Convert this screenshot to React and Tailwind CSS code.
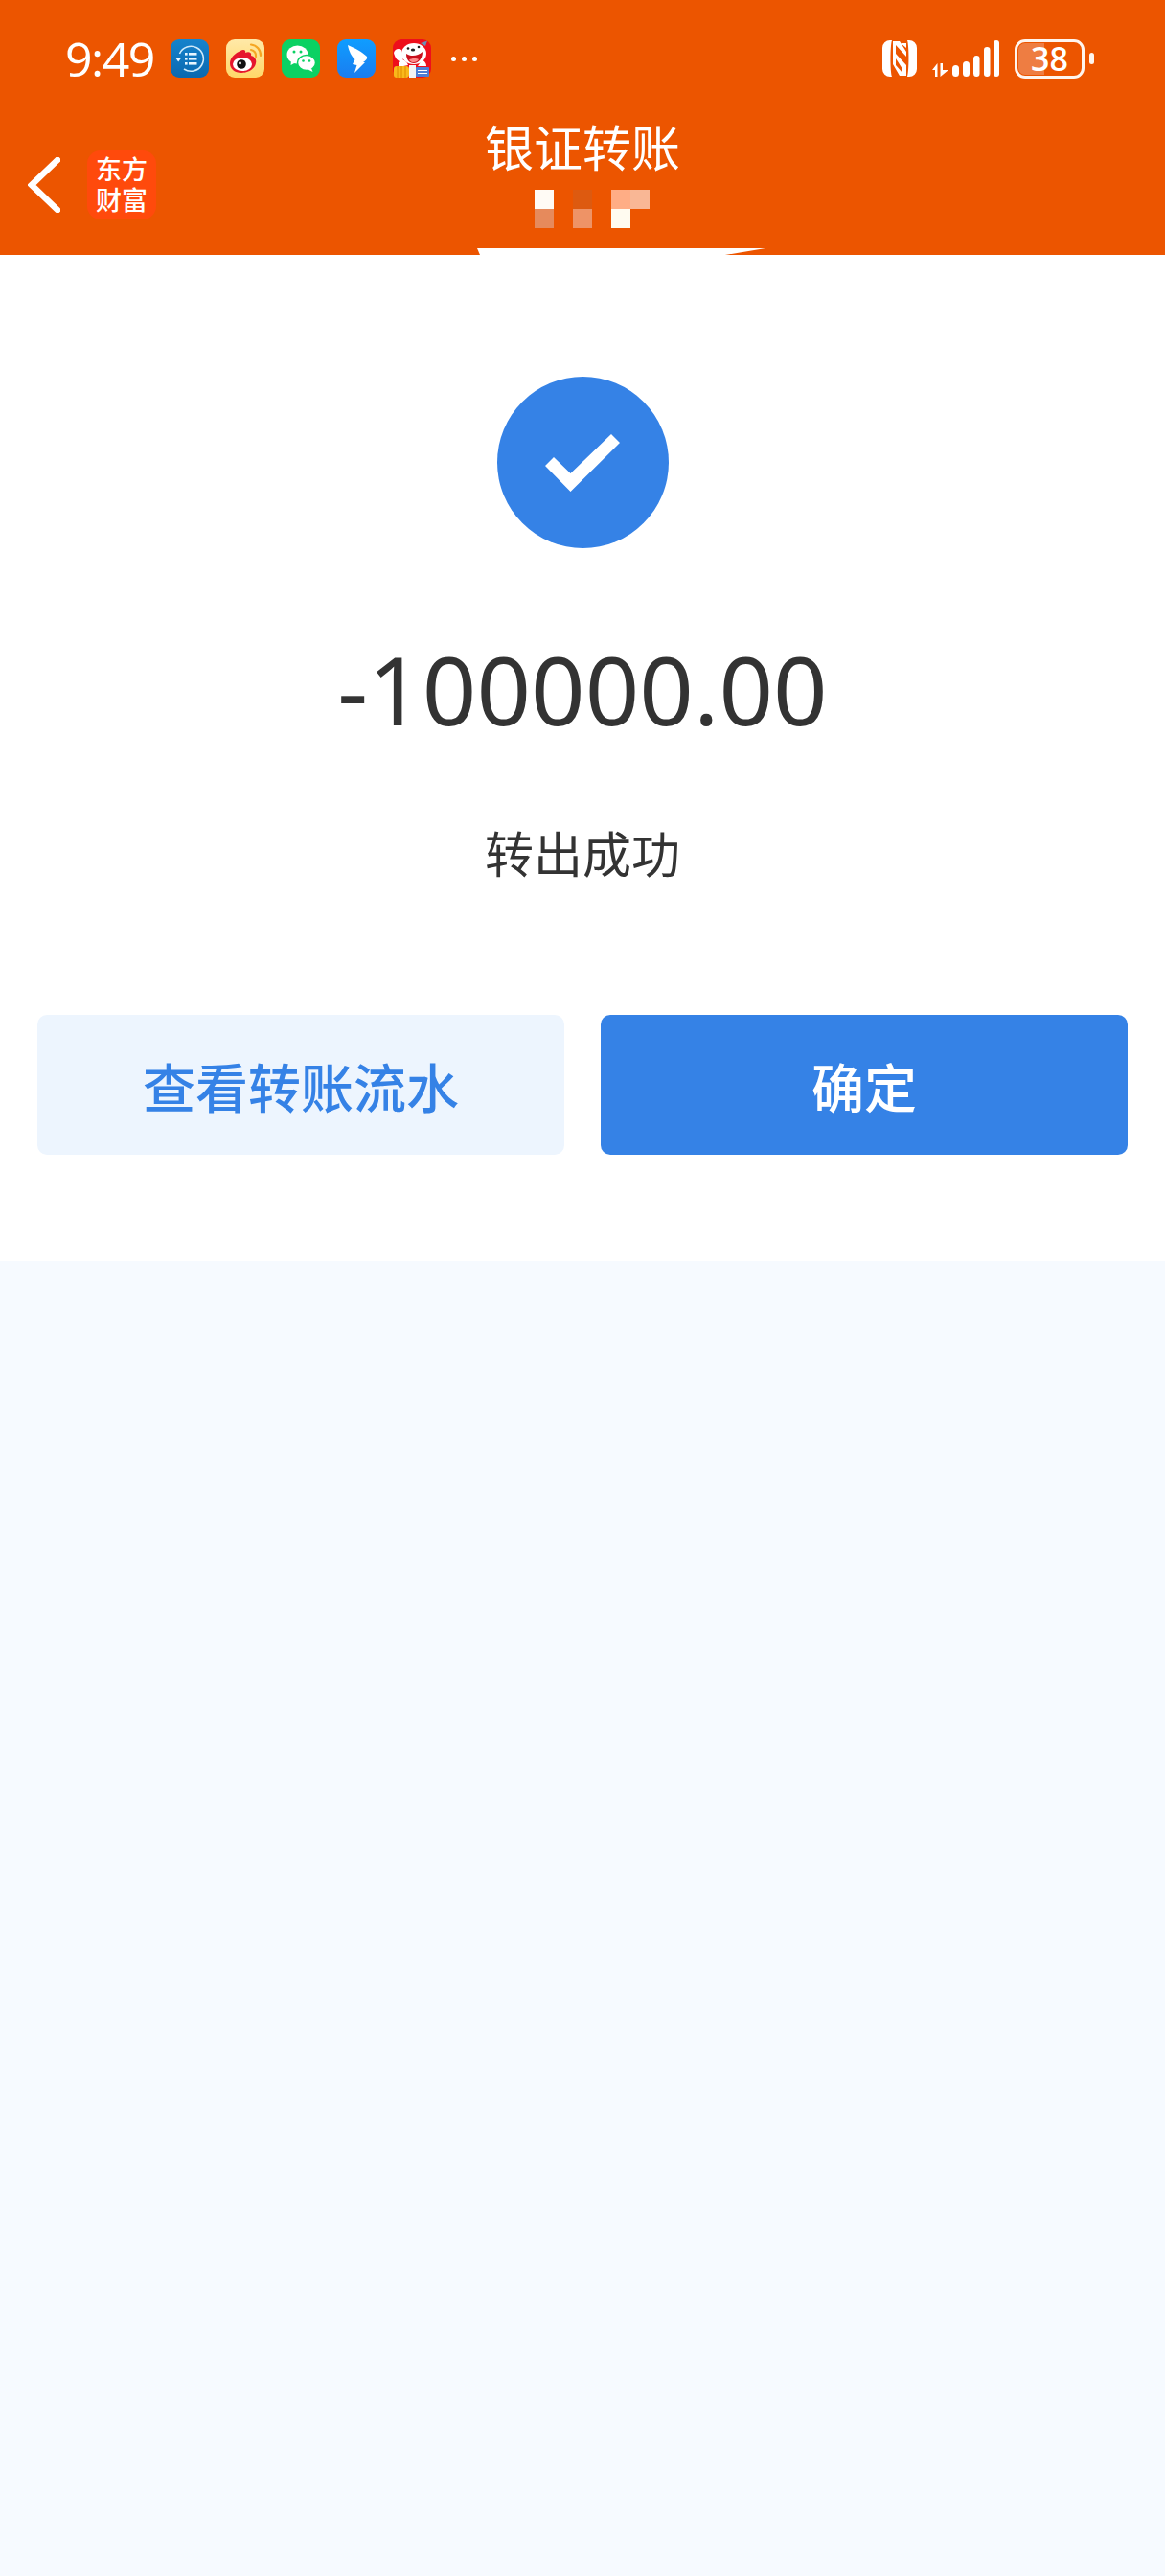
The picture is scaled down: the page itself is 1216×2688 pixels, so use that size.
import React from 'react';

const cjk = "font-['Noto_Sans_CJK_SC','Noto_Sans',sans-serif]";

const ListIcon = () => (
  <svg viewBox="0 0 40 40" className="w-10 h-10">
    <defs>
      <linearGradient id="tile" x1="0" y1="0" x2="0" y2="1">
        <stop offset="0" stopColor="#1683cc" />
        <stop offset="1" stopColor="#0a68b0" />
      </linearGradient>
    </defs>
    <rect width="40" height="40" rx="9" fill="url(#tile)" />
    <path d="M9.5 15 A13 13 0 1 1 14 31" fill="none" stroke="#cfeafa" strokeWidth="1.6" />
    <path d="M5 19 L11.5 19 L8.2 23.5 Z" fill="#e8f6ff" />
    <rect x="15" y="14" width="2.6" height="2.6" fill="#e8f6ff" />
    <rect x="19" y="14" width="8.5" height="2.6" fill="#e8f6ff" />
    <rect x="15" y="19" width="2.6" height="2.6" fill="#e8f6ff" />
    <rect x="19" y="19" width="8.5" height="2.6" fill="#e8f6ff" />
    <rect x="15" y="24" width="2.6" height="2.6" fill="#e8f6ff" />
    <rect x="19" y="24" width="8.5" height="2.6" fill="#e8f6ff" />
  </svg>
);

const WeiboIcon = () => (
  <svg viewBox="0 0 40 40" className="w-10 h-10">
    <defs>
      <linearGradient id="wb" x1="0" y1="0" x2="0" y2="1">
        <stop offset="0" stopColor="#ffe9a8" />
        <stop offset="1" stopColor="#ffd869" />
      </linearGradient>
    </defs>
    <rect width="40" height="40" rx="9" fill="url(#wb)" />
    <path d="M4 25 C4 19 10 14 15 12 C18 10 21 11 20 14 C24 12 27 14 26 17 C30 18 32 21 31 25 C30 31 23 35 16 35 C9 35 4 31 4 25 Z" fill="#e6162d" />
    <ellipse cx="17" cy="26" rx="10" ry="7" fill="#fff" />
    <circle cx="16" cy="26" r="4.8" fill="#111" />
    <circle cx="14.5" cy="25" r="1.4" fill="#fff" />
    <path d="M26 11 A6 6 0 0 1 31 18" fill="none" stroke="#f5a623" strokeWidth="2.2" strokeLinecap="round" />
    <path d="M26 5.5 A11 11 0 0 1 36 17" fill="none" stroke="#f5a623" strokeWidth="2.2" strokeLinecap="round" />
  </svg>
);

const WechatIcon = () => (
  <svg viewBox="0 0 40 40" className="w-10 h-10">
    <rect width="40" height="40" rx="9" fill="#0bd163" />
    <ellipse cx="16.5" cy="16" rx="11" ry="9.5" fill="#fff" />
    <path d="M10 22 L9.5 27 L15 24 Z" fill="#fff" />
    <ellipse cx="26" cy="24.5" rx="9.5" ry="8" stroke="#0bd163" strokeWidth="1.5" fill="#fff" />
    <path d="M31 30 L32.5 34 L27.5 31.5 Z" fill="#fff" />
    <circle cx="13" cy="13" r="1.5" fill="#0bd163" />
    <circle cx="20" cy="13" r="1.5" fill="#0bd163" />
    <circle cx="22.5" cy="22.5" r="1.3" fill="#0bd163" />
    <circle cx="29" cy="22.5" r="1.3" fill="#0bd163" />
  </svg>
);

const DingIcon = () => (
  <svg viewBox="0 0 40 40" className="w-10 h-10">
    <defs>
      <linearGradient id="dd" x1="0" y1="0" x2="0" y2="1">
        <stop offset="0" stopColor="#0f9dff" />
        <stop offset="1" stopColor="#1a7df0" />
      </linearGradient>
    </defs>
    <rect width="40" height="40" rx="9" fill="url(#dd)" />
    <path d="M11 6 C18 9 26 13 31 18 C32 20 30 22 27 24 L29 24 L18 35 L20.5 27 L16 26 L18.5 21 C15 18 12 12 11 6 Z" fill="#fff" />
  </svg>
);

const JdIcon = () => (
  <svg viewBox="0 0 40 40" className="w-10 h-10">
    <rect width="40" height="40" rx="9" fill="#ee0f1c" />
    <path d="M1 14 C2 10 6 9 9 11 L11 23 C7 25 2 20 1 14 Z" fill="#fff" />
    <ellipse cx="22" cy="15" rx="13" ry="11" fill="#fff" />
    <path d="M6 24 C10 20 14 22 16 27 L6 29 Z" fill="#fff" />
    <path d="M30 22 C33 22 35 25 35 28 L26 28 Z" fill="#fff" />
    <path d="M14 15 C18 18 26 18 31 13 C31 21 26 25 22 25 C17 25 14 21 14 15 Z" fill="#c8101c" />
    <path d="M17 21.5 C19 19.5 25 19.5 27 21 C25 25 19 25 17 21.5 Z" fill="#ff8a8a" />
    <circle cx="16" cy="9.5" r="1.3" fill="#222" />
    <circle cx="27" cy="8" r="1.3" fill="#222" />
    <ellipse cx="21" cy="11" rx="2.2" ry="1.5" fill="#222" />
    <path d="M29 4 L36 1.5 L34 7 Z" fill="#6b8fb5" />
    <rect x="1" y="28" width="16" height="12" rx="3" fill="#f9b91b" />
    <path d="M5 28 V40 M9 28 V40 M13 28 V40" stroke="#e08a00" strokeWidth="1" />
    <rect x="17" y="27" width="7" height="13" fill="#f4f4f4" />
    <rect x="24" y="29" width="14" height="10" rx="1" fill="#4c7fd6" />
    <path d="M26 32.5 H36 M26 35.5 H36" stroke="#fff" strokeWidth="1.2" />
  </svg>
);

const NfcIcon = () => (
  <svg viewBox="0 0 36 38" className="w-9 h-[38px]">
    <path d="M8 0 H10 C8 6 8 32 10 38 H8 A8 8 0 0 1 0 30 V8 A8 8 0 0 1 8 0 Z" fill="#fff" />
    <path d="M28 0 H26 C28 6 28 32 26 38 H28 A8 8 0 0 0 36 30 V8 A8 8 0 0 0 28 0 Z" fill="#fff" />
    <path d="M11 1 H18 L25 12 V17 L14 5 V14 L25 26 V37 H18 L11 25 Z" fill="#fff" />
    <path d="M14 19 L21 30 V34 L14 26 Z" fill="#ec5500" />
    <path d="M19 3 H25 V8 Z" fill="#fff" />
  </svg>
);

const SignalIcon = () => (
  <svg viewBox="0 0 70 38" className="w-[70px] h-[38px]">
    <path d="M0 31 L5.5 24 V38 H3 V31 Z" fill="#fff" />
    <path d="M8.5 24 H11 V31 H17 L8.5 38 Z" fill="#fff" />
    <rect x="21" y="26" width="7" height="12" rx="3.5" fill="#fff" />
    <rect x="32" y="22" width="7" height="16" rx="3.5" fill="#fff" />
    <rect x="43" y="16" width="6.5" height="22" rx="3.2" fill="#fff" />
    <rect x="54" y="7" width="6.5" height="31" rx="3.2" fill="#fff" />
    <rect x="64" y="0" width="6" height="38" rx="3" fill="#fff" />
  </svg>
);

const Battery = () => (
  <div className="flex items-center gap-[5px]">
    <div className="relative flex items-center justify-center w-[73px] h-[41px] rounded-[11px] border-[3px] border-[#fff5ee]">
      <div className="absolute left-[1px] top-[1px] bottom-[1px] w-[27px] rounded-l-[7px] bg-[#ee7d42]" />
      <span className="relative font-['Open_Sans',sans-serif] text-[34px] leading-none font-semibold text-white">38</span>
    </div>
    <div className="w-[5px] h-3 rounded-full bg-[#fff5ee]" />
  </div>
);

const StatusBar = () => (
  <div className="flex items-center justify-between h-10 mt-[41px] pl-[68px] pr-[74px]">
    <div className="flex items-center">
      <span className="w-[110px] font-['Open_Sans',sans-serif] text-[50px] leading-10 font-medium tracking-[-1.5px] text-white">9:49</span>
      <div className="flex gap-[18px]">
        <ListIcon />
        <WeiboIcon />
        <WechatIcon />
        <DingIcon />
        <JdIcon />
      </div>
      <div className="flex gap-[6px] ml-[21px]">
        <span className="w-[5px] h-[5px] rounded-full bg-white" />
        <span className="w-[5px] h-[5px] rounded-full bg-white" />
        <span className="w-[5px] h-[5px] rounded-full bg-white" />
      </div>
    </div>
    <div className="flex items-center">
      <NfcIcon />
      <div className="ml-4 mr-4"><SignalIcon /></div>
      <Battery />
    </div>
  </div>
);

// mosaic over the masked name under the title
const mosaic = [
  ['#fffbf5', null, '#dd5a10', null, '#ffad85', '#f9b795'],
  ['#e68a5c', null, '#ee9366', null, '#fffbf0', null],
];

const Header = () => (
  <header className="relative h-[266px] bg-[#ec5500] flex flex-col">
    <StatusBar />
    <div className="relative flex-1">
      <svg viewBox="0 0 34 58" className="absolute left-[29px] top-[83px] w-[34px] h-[58px]">
        <path d="M31 3 L4 29 L31 55" fill="none" stroke="#fff" strokeWidth="6.5" strokeLinecap="round" strokeLinejoin="miter" />
      </svg>
      <div className={`absolute left-[91px] top-[76px] w-[72px] h-[72px] pb-[3px] rounded-[14px] bg-[#ff4a0c] flex flex-col items-center justify-center text-white font-medium text-[27px] leading-[32px] ${cjk}`}>
        <span>东方</span>
        <span>财富</span>
      </div>
      <div className="flex flex-col items-center">
        <div className={`mt-[40px] h-[62px] text-[51px] leading-[62px] text-white ${cjk}`}>银证转账</div>
        <div className="flex flex-col mt-[15px] ml-[20px] w-[120px]">
          {mosaic.map((row, i) => (
            <div key={i} className="flex">
              {row.map((c, j) => (
                <div key={j} className="w-5 h-5" style={{ backgroundColor: c || 'transparent' }} />
              ))}
            </div>
          ))}
        </div>
      </div>
    </div>
    <div className="absolute left-[498px] bottom-0 w-[301px] h-[7px] bg-white [clip-path:polygon(0_0,100%_0,86%_100%,1%_100%)]" />
  </header>
);

const SuccessIcon = () => (
  <div className="flex items-center justify-center w-[179px] h-[179px] rounded-full bg-[#3582e6]">
    <svg viewBox="0 0 78 60" className="w-[78px] h-[60px]">
      <path d="M0 33 L9 24 L26.5 41 L69 0 L78 9 L26.5 60 Z" fill="#fff" />
    </svg>
  </div>
);

export default function App() {
  return (
    <div className="min-h-[2688px] bg-[#f6faff] flex flex-col">
      <Header />
      <main className="bg-white flex flex-col items-center pt-[127px] pb-[111px] px-[39px]">
        <SuccessIcon />
        <div className="mt-[87px] h-[120px] font-['Noto_Sans',sans-serif] text-[99px] leading-[120px] text-[#333333]">-100000.00</div>
        <div className={`mt-[72px] h-[76px] text-[51px] leading-[76px] text-[#333333] ${cjk}`}>转出成功</div>
        <div className="flex gap-[38px] w-full mt-[132px]">
          <button className={`flex-1 h-[146px] rounded-[10px] bg-[#edf5fe] text-[#3582e6] text-[55px] font-medium ${cjk}`}>查看转账流水</button>
          <button className={`flex-1 h-[146px] rounded-[10px] bg-[#3582e6] text-white text-[55px] font-medium ${cjk}`}>确定</button>
        </div>
      </main>
    </div>
  );
}
